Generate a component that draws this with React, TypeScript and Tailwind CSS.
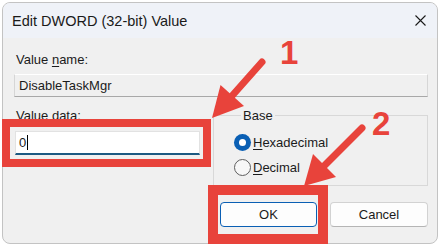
import React from 'react'

const RED = '#e8433b'

function Radio({ checked }: { checked: boolean }) {
  return checked ? (
    <span className="flex h-[17px] w-[17px] items-center justify-center rounded-full bg-[#0a5fb4]">
      <span className="h-[7px] w-[7px] rounded-full bg-white" />
    </span>
  ) : (
    <span className="h-[17px] w-[17px] rounded-full border border-[#5e5e5e] bg-[#f7f7f7]" />
  )
}

function Annotations() {
  return (
    <svg className="pointer-events-none absolute inset-0" width="440" height="245" viewBox="0 0 440 245">
      {/* boxes */}
      <rect x="6" y="123" width="201" height="40" fill="none" stroke={RED} strokeWidth="8" />
      <rect x="213" y="190" width="110" height="49" fill="none" stroke={RED} strokeWidth="10" />

      {/* arrow 1 */}
      <line x1="262" y1="62" x2="231" y2="97" stroke={RED} strokeWidth="7" strokeLinecap="round" />
      <polygon points="212,118 220.5,85 244,106" fill={RED} />
      {/* arrow 2 */}
      <line x1="362" y1="128" x2="324" y2="166" stroke={RED} strokeWidth="7" strokeLinecap="round" />
      <polygon points="304,186 313,154 336,177" fill={RED} />

      <text x="280" y="64" fill={RED} fontSize="33" fontWeight="700" fontFamily="'Liberation Sans', Arial, sans-serif">
        1
      </text>
      <text x="372" y="135" fill={RED} fontSize="33" fontWeight="700" fontFamily="'Liberation Sans', Arial, sans-serif">
        2
      </text>
    </svg>
  )
}

export default function App() {
  return (
    <div className="relative h-[245px] w-[440px] overflow-hidden bg-white pl-[2px] pt-[2px] font-['Liberation_Sans',Arial,sans-serif] text-[13px] leading-[15px] text-[#1b1b1b]">
      <div className="flex h-[242px] w-[436px] flex-col overflow-hidden rounded-[8px] border border-[#c3c3c3] bg-[#f0f0f0]">
        {/* Title bar */}
        <div className="flex h-[35px] shrink-0 items-center justify-between bg-[#eff2f8] pl-[9px] pr-[11px]">
          <span className="text-[14.5px] leading-[18px] text-[#1a1a1a]">Edit DWORD (32-bit) Value</span>
          <svg width="11" height="11" viewBox="0 0 11 11">
            <path d="M0.5 0.5 L10.5 10.5 M10.5 0.5 L0.5 10.5" stroke="#1a1a1a" strokeWidth="1.1" fill="none" />
          </svg>
        </div>

        {/* Body */}
        <div className="flex flex-col pl-[11px] pr-[9px] pt-[14px]">
          <span className="pl-[2px]">
            Value <u className="underline-offset-2">n</u>ame:
          </span>
          <div className="mt-[7px] flex h-[23px] items-center border border-[#d6d6d6] border-b-[#a8a8a8] border-t-white bg-[#f0f0f0] pl-[4px]">
            DisableTaskMgr
          </div>

          <div className="mt-[11px] flex gap-[12px]">
            <div className="flex w-[187px] flex-col">
              <span className="pl-[2px]">
                Value <u className="underline-offset-2">d</u>ata:
              </span>
              <div className="ml-[1px] mt-[8px] flex h-[24px] w-[185px] items-center border border-[#e2e2e2] border-b-2 border-b-[#1d5a82] bg-white pl-[3px]">
                0<span className="ml-[1px] h-[15px] w-px bg-black" />
              </div>
            </div>

            <fieldset className="h-[78px] flex-1 border border-[#d8d8d8] pl-[20px]">
              <legend className="ml-[7px] px-[2px]">Base</legend>
              <div className="mt-[11px] flex items-center gap-[2px]">
                <Radio checked />
                <span>
                  <u className="underline-offset-2">H</u>exadecimal
                </span>
              </div>
              <div className="mt-[8px] flex items-center gap-[2px]">
                <Radio checked={false} />
                <span>
                  <u className="underline-offset-2">D</u>ecimal
                </span>
              </div>
            </fieldset>
          </div>

          <div className="mt-[16px] flex justify-end gap-[13px]">
            <button className="flex h-[25px] w-[97px] items-center justify-center rounded-[4px] border border-[#0a5fb4] bg-[#fdfdfd] text-[13px]">
              OK
            </button>
            <button className="flex h-[25px] w-[98px] items-center justify-center rounded-[4px] border border-[#d2d2d2] border-b-[#b5b5b5] bg-[#fdfdfd] text-[13px]">
              Cancel
            </button>
          </div>
        </div>
      </div>
      <Annotations />
    </div>
  )
}
